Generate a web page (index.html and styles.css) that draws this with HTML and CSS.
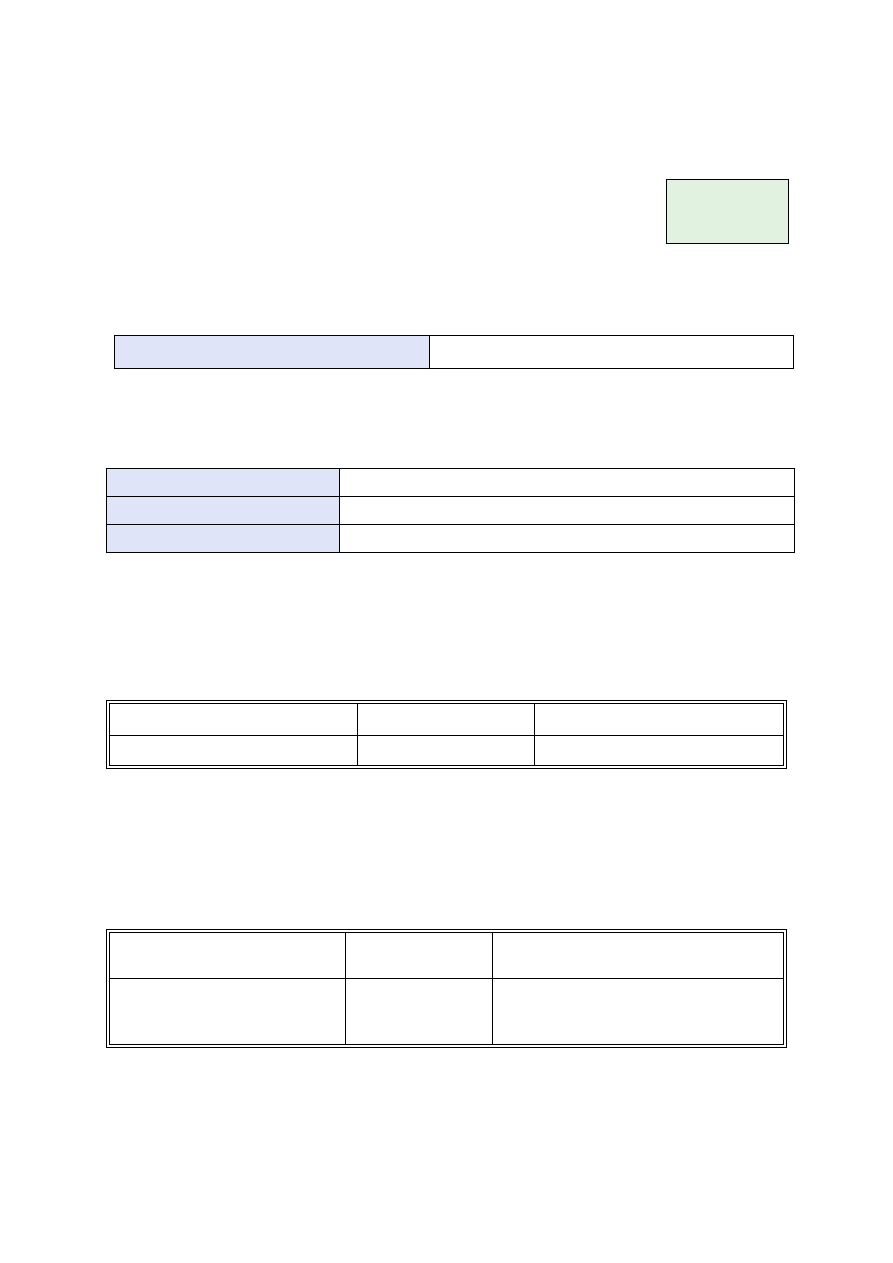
FILE: index.html
```html
<!DOCTYPE html>
<html>
<head>
<meta charset="utf-8">
<link rel="stylesheet" href="styles.css">
</head>
<body>
<div class="page">
  <div class="stamp"></div>

  <div class="grid t1">
    <div class="cell shade"></div>
    <div class="cell"></div>
  </div>

  <div class="grid t2">
    <div class="cell shade"></div><div class="cell"></div>
    <div class="cell shade"></div><div class="cell"></div>
    <div class="cell shade"></div><div class="cell"></div>
  </div>

  <div class="frame f3">
    <div class="grid t3">
      <div class="cell"></div><div class="cell"></div><div class="cell"></div>
      <div class="cell"></div><div class="cell"></div><div class="cell"></div>
    </div>
  </div>

  <div class="frame f4">
    <div class="grid t4">
      <div class="cell"></div><div class="cell"></div><div class="cell"></div>
      <div class="cell"></div><div class="cell"></div><div class="cell"></div>
    </div>
  </div>
</div>
</body>
</html>
```
FILE: styles.css
```css
html, body {
  margin: 0;
  padding: 0;
  background: #ffffff;
  font-family: "Liberation Sans", Arial, sans-serif;
}
.page {
  width: 893px;
  min-height: 1263px;
  padding-top: 179px;
  box-sizing: border-box;
  display: flex;
  flex-direction: column;
  align-items: flex-start;
}
.stamp {
  margin-left: 666px;
  width: 121px;
  height: 63px;
  border: 1px solid #000;
  background: #e2f2e0;
}
.grid {
  display: grid;
  border-top: 1px solid #000;
  border-left: 1px solid #000;
}
.cell {
  border-right: 1px solid #000;
  border-bottom: 1px solid #000;
  background: #fff;
}
.cell.shade {
  background: #dfe4f8;
}
.t1 {
  margin-top: 91px;
  margin-left: 114px;
  grid-template-columns: 315px 364px;
  grid-template-rows: 33px;
}
.t2 {
  margin-top: 99px;
  margin-left: 106px;
  grid-template-columns: 233px 455px;
  grid-template-rows: 28px 28px 28px;
}
.frame {
  margin-left: 106px;
  border: 1px solid #000;
  padding: 2px;
}
.f3 {
  margin-top: 147px;
}
.f4 {
  margin-top: 160px;
}
.t3 {
  grid-template-columns: 248px 177px 249px;
  grid-template-rows: 32px 30px;
}
.t4 {
  grid-template-columns: 236px 147px 291px;
  grid-template-rows: 46px 66px;
}
```
